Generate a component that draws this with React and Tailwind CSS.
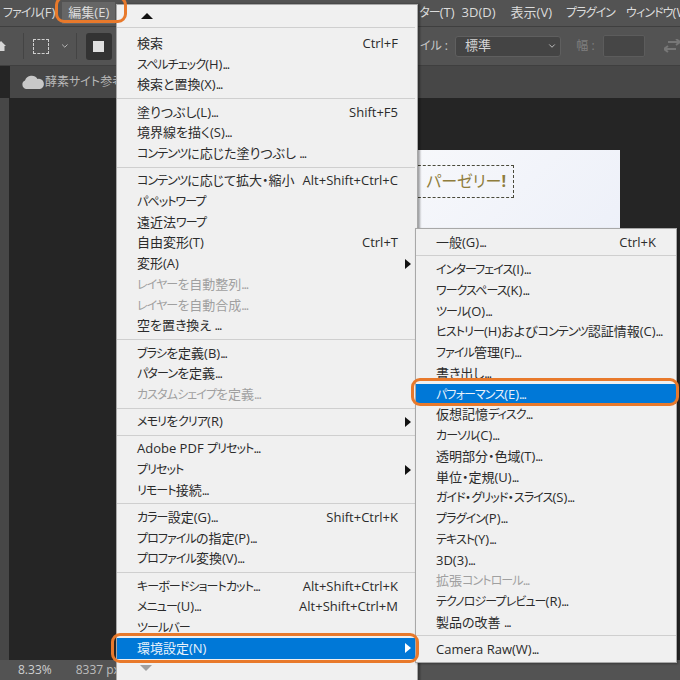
import { ChevronDown } from "lucide-react";

const FONT = "font-['Open_Sans','Noto_Sans_CJK_JP',sans-serif] [font-feature-settings:'palt']";

const mainMenu = [
  [
    { label: "検索", key: "Ctrl+F" },
    { label: "スペルチェック(H)..." },
    { label: "検索と置換(X)..." },
  ],
  [
    { label: "塗りつぶし(L)...", key: "Shift+F5" },
    { label: "境界線を描く(S)..." },
    { label: "コンテンツに応じた塗りつぶし ..." },
  ],
  [
    { label: "コンテンツに応じて拡大・縮小", key: "Alt+Shift+Ctrl+C" },
    { label: "パペットワープ" },
    { label: "遠近法ワープ" },
    { label: "自由変形(T)", key: "Ctrl+T" },
    { label: "変形(A)", arrow: true },
    { label: "レイヤーを自動整列...", off: true },
    { label: "レイヤーを自動合成...", off: true },
    { label: "空を置き換え ..." },
  ],
  [
    { label: "ブラシを定義(B)..." },
    { label: "パターンを定義..." },
    { label: "カスタムシェイプを定義...", off: true },
  ],
  [{ label: "メモリをクリア(R)", arrow: true }],
  [
    { label: "Adobe PDF プリセット..." },
    { label: "プリセット", arrow: true },
    { label: "リモート接続..." },
  ],
  [
    { label: "カラー設定(G)...", key: "Shift+Ctrl+K" },
    { label: "プロファイルの指定(P)..." },
    { label: "プロファイル変換(V)..." },
  ],
  [
    { label: "キーボードショートカット...", key: "Alt+Shift+Ctrl+K" },
    { label: "メニュー(U)...", key: "Alt+Shift+Ctrl+M" },
    { label: "ツールバー" },
    { label: "環境設定(N)", arrow: true, active: true },
  ],
];

const subMenu = [
  [{ label: "一般(G)...", key: "Ctrl+K" }],
  [
    { label: "インターフェイス(I)..." },
    { label: "ワークスペース(K)..." },
    { label: "ツール(O)..." },
    { label: "ヒストリー(H)およびコンテンツ認証情報(C)..." },
    { label: "ファイル管理(F)..." },
    { label: "書き出し..." },
    { label: "パフォーマンス(E)...", active: true },
    { label: "仮想記憶ディスク..." },
    { label: "カーソル(C)..." },
    { label: "透明部分・色域(T)..." },
    { label: "単位・定規(U)..." },
    { label: "ガイド・グリッド・スライス(S)..." },
    { label: "プラグイン(P)..." },
    { label: "テキスト(Y)..." },
    { label: "3D(3)..." },
    { label: "拡張コントロール...", off: true },
    { label: "テクノロジープレビュー(R)..." },
    { label: "製品の改善 ..." },
  ],
  [{ label: "Camera Raw(W)..." }],
];

// katakana runs are set tighter than kanji in the Photoshop menus
function JpText({ text }) {
  return text.split(/([ァ-ヶー]+|\.\.\.)/).map((part, i) =>
    i % 2 === 1 ? (
      <span key={i} className={part === "..." ? "tracking-[-1.2px]" : "text-[12px] tracking-[-0.9px]"}>
        {part}
      </span>
    ) : (
      part
    ),
  );
}

function MenuRow({ item, pad }) {
  const color = item.active
    ? "bg-[#0078d7] text-[#e8f2fb]"
    : item.off
      ? "text-[#a0a0a0]"
      : "text-[#2b2b2b]";
  return (
    <div className={`flex h-[20.75px] items-center justify-between pl-5 text-[13px] leading-none ${pad} ${color}`}>
      <span className="whitespace-nowrap">
        <JpText text={item.label} />
      </span>
      {item.key && <span className="whitespace-nowrap">{item.key}</span>}
      {item.arrow && (
        <span className={`-mr-[13px] h-0 w-0 border-y-[5px] border-l-[6px] border-y-transparent ${item.active ? "border-l-white" : "border-l-[#111]"}`} />
      )}
    </div>
  );
}

function MenuSections({ sections, pad }) {
  return sections.map((rows, i) => (
    <div key={i} className={i > 0 ? "mt-[2.7px] border-t border-[#cfcfcf] pt-[2.7px]" : ""}>
      {rows.map((item) => (
        <MenuRow key={item.label} item={item} pad={pad} />
      ))}
    </div>
  ));
}

function OrangeRing({ className }) {
  return <div className={`absolute rounded-[9px] border-[3px] border-[#e8792b] ${className}`} />;
}

export default function App() {
  return (
    <div className={`relative flex h-[680px] w-[680px] flex-col overflow-hidden bg-[#252525] ${FONT}`}>
      {/* menu bar */}
      <div className="flex h-[27px] shrink-0 items-center overflow-hidden whitespace-nowrap border-b border-[#3f3f3f] bg-[#535353] text-[13px] text-[#dcdcdc]">
        <span className="ml-[3px] shrink-0"><JpText text="ファイル(F)" /></span>
        <span className="ml-[7px] shrink-0 bg-[#666] px-[6px] py-[1px]">編集(E)</span>
        <span className="ml-[304px] shrink-0"><JpText text="ター(T)" /></span>
        <span className="ml-[7px] shrink-0">3D(D)</span>
        <span className="ml-[15px] shrink-0">表示(V)</span>
        <span className="ml-[14px] shrink-0"><JpText text="プラグイン" /></span>
        <span className="ml-[11px] shrink-0"><JpText text="ウィンドウ(W)" /></span>
      </div>

      {/* options bar */}
      <div className="flex h-[39px] shrink-0 items-center border-b border-[#3f3f3f] bg-[#535353] text-[12px] text-[#c8c8c8]">
        <svg width="6" height="14" viewBox="0 0 6 14" className="shrink-0">
          <path d="M-4 7 L1 2 L6 7 H4.5 V12 H-3 V7Z" fill="#d6d6d6" />
        </svg>
        <div className="ml-[17px] h-[26px] w-px bg-[#444]" />
        <div className="ml-[9px] h-[15px] w-[17px] border border-dashed border-[#cfcfcf]" />
        <ChevronDown size={10} strokeWidth={2} className="ml-[11px] text-[#cfcfcf]" />
        <div className="ml-[6px] h-[26px] w-px bg-[#444]" />
        <div className="ml-[9px] flex h-[27px] w-[27px] items-center justify-center rounded-[3px] bg-[#333]">
          <div className="h-[11px] w-[11px] bg-[#e0e0e0]" />
        </div>
        <span className="ml-[308px] whitespace-nowrap">イル :</span>
        <div className="ml-[7px] flex h-[21px] w-[110px] items-center justify-between rounded-[3px] border border-[#5f5f5f] bg-[#444] pl-[9px] pr-[3px] text-[13px] text-[#d4d4d4]">
          <span>標準</span>
          <ChevronDown size={10} strokeWidth={2} />
        </div>
        <span className="ml-[15px] whitespace-nowrap text-[#7f7f7f]">幅 :</span>
        <div className="ml-[8px] h-[22px] w-[44px] rounded-[2px] border border-[#5c5c5c] bg-[#464646]" />
        <svg width="16" height="14" viewBox="0 0 16 14" className="ml-[19px] shrink-0">
          <path d="M4 3 H16 M12 0 L16 3 L12 6 M0 10 H12 M4 7 L0 10 L4 13" fill="none" stroke="#777" strokeWidth="2" />
        </svg>
      </div>

      {/* tab bar */}
      <div className="ml-[10px] flex h-[32px] shrink-0 items-center bg-[#474747] pl-[11px] text-[12px] text-[#b9b9b9]">
        <svg width="24" height="14" viewBox="0 0 24 14" className="shrink-0">
          <path d="M5 14 A4.5 4.5 0 0 1 4 5.5 A7 7 0 0 1 16.5 4 A5 5 0 0 1 19 14 Z" fill="#c8c8c8" />
        </svg>
        <span className="whitespace-nowrap">酵素サイト参考</span>
      </div>

      {/* canvas area */}
      <div className="relative flex min-h-0 flex-1">
        <div className="w-[9px] shrink-0 bg-[#474747]" />
        <div className="relative flex-1 bg-[#252525]">
          <div className="absolute left-[400px] top-[52px] h-[200px] w-[211px] bg-gradient-to-br from-[#f7f8fb] to-[#e9edf8]">
            <div className="absolute left-[4px] top-[15px] flex h-[33px] w-[101px] items-center justify-end border-[1.5px] border-dashed border-[#4a4a3a] pb-[2px] pr-[7px] text-[16px] whitespace-nowrap text-[#8f7d3c]">
              パーゼリー<span className="font-bold">!</span>
            </div>
          </div>
        </div>
      </div>

      {/* status bar */}
      <div className="flex h-[20px] shrink-0 items-center bg-[#535353] pl-[18px] text-[12px] text-[#cfcfcf]">
        <span>8.33%</span>
        <span className="ml-[24px] whitespace-nowrap text-[#bdbdbd]">8337 px</span>
      </div>

      {/* edit menu */}
      <div className="absolute left-[116px] top-[4px] h-[690px] w-[302px] border-r border-t border-l border-[#a8a8a8] bg-[#f0f0f0] pr-[2px] shadow-[2px_0_2px_rgba(0,0,0,0.35)]">
        <div className="flex h-[23px] items-center border-b border-[#cfcfcf] pl-[24px]">
          <span className="h-0 w-0 border-x-[6px] border-b-[6px] border-x-transparent border-b-[#111]" />
        </div>
        <div className="pt-[5px]">
          <MenuSections sections={mainMenu} pad="pr-[17px]" />
        </div>
        <div className="mt-[6px] pl-[23px]">
          <span className="block h-0 w-0 border-x-[6px] border-t-[6px] border-x-transparent border-t-[#a0a0a0]" />
        </div>
      </div>

      {/* preferences submenu */}
      <div className="absolute left-[415px] top-[228px] w-[262px] border border-[#a8a8a8] bg-[#f0f0f0] pt-[3px] pb-[2px] shadow-[1px_1px_2px_rgba(0,0,0,0.3)]">
        <MenuSections sections={subMenu} pad="pr-[20px]" />
      </div>

      {/* annotation rings */}
      <OrangeRing className="left-[55px] top-[-4px] h-[27px] w-[72px]" />
      <OrangeRing className="left-[111px] top-[633px] h-[30px] w-[308px]" />
      <OrangeRing className="left-[411px] top-[378px] h-[28px] w-[268px]" />
    </div>
  );
}
